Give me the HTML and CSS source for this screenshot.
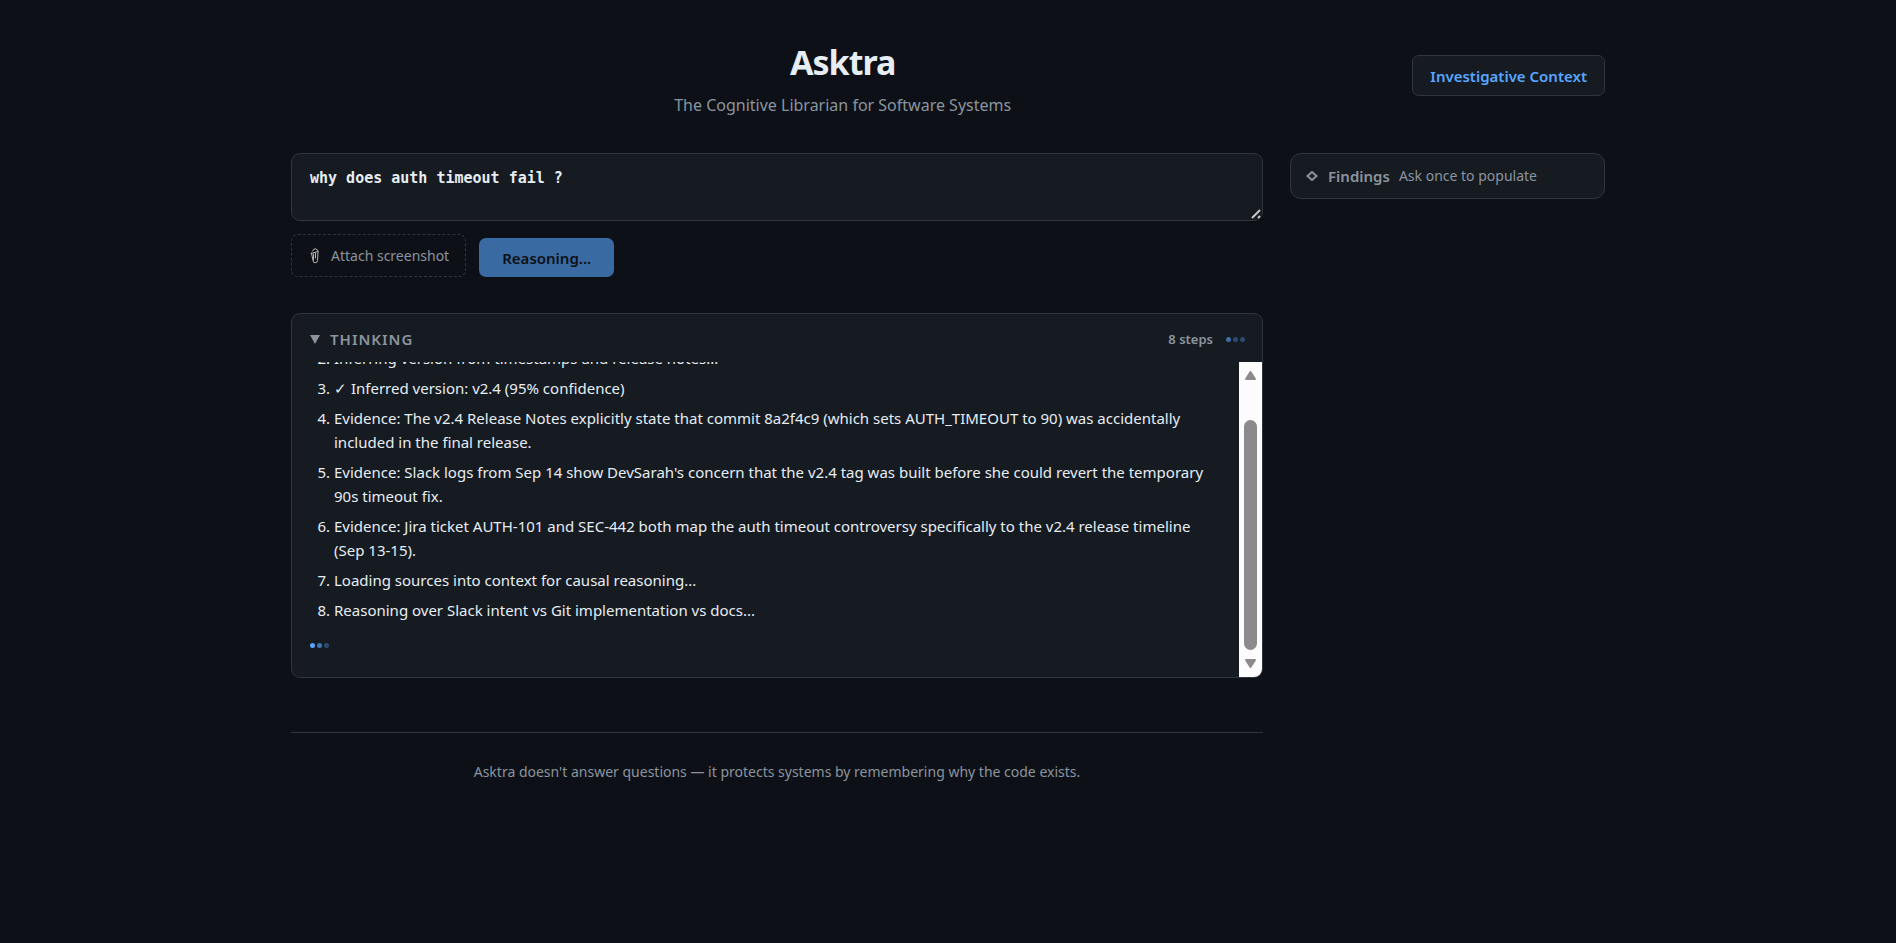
FILE: index.html
```html
<!DOCTYPE html>
<html lang="en">
<head>
    <meta charset="UTF-8">
    <title>Asktra</title>
    <link rel="stylesheet" href="styles.css">
</head>
<body>
    <div class="app">
        <header class="header">
            <div class="header-center">
                <h1>Asktra</h1>
                <p class="tagline">The Cognitive Librarian for Software Systems</p>
            </div>
            <button type="button" class="context-btn">Investigative Context</button>
        </header>

        <div class="layout">
            <main class="main">
                <form class="ask-form">
                    <textarea class="query" aria-label="Question">why does auth timeout fail ?</textarea>
                    <div class="actions">
                        <button type="button" class="attach-btn">
                            <svg class="clip" viewBox="0 0 10 16" aria-hidden="true">
                                <path d="M1.500 5l1.500 7.500a2.200 2.200 0 0 0 4.500 0L8 4a2.800 2.800 0 0 0-5.500-1M3.500 6v6M5.500 5v5M1 5.500l7-2" fill="none" stroke="#b9b4b2" stroke-linecap="round"/>
                            </svg>
                            Attach screenshot
                        </button>
                        <button type="submit" class="ask-btn" disabled>Reasoning...</button>
                    </div>
                </form>

                <section class="thinking">
                    <button type="button" class="thinking-header" aria-expanded="true">
                        <svg class="chevron" viewBox="0 0 10 9" aria-hidden="true"><path d="M0 0h10L5 9z"/></svg>
                        <span class="thinking-title">Thinking</span>
                        <span class="step-count">8 steps</span>
                        <span class="dots dots-header"><i></i><i></i><i></i></span>
                    </button>
                    <div class="thinking-panel">
                        <div class="thinking-body" id="thinkingBody">
                            <ol class="steps" start="2">
                                <li>Inferring version from timestamps and release notes...</li>
                                <li>✓ Inferred version: v2.4 (95% confidence)</li>
                                <li>Evidence: The v2.4 Release Notes explicitly state that commit 8a2f4c9 (which sets AUTH_TIMEOUT to 90) was accidentally included in the final release.</li>
                                <li>Evidence: Slack logs from Sep 14 show DevSarah's concern that the v2.4 tag was built before she could revert the temporary 90s timeout fix.</li>
                                <li>Evidence: Jira ticket AUTH-101 and SEC-442 both map the auth timeout controversy specifically to the v2.4 release timeline (Sep 13-15).</li>
                                <li>Loading sources into context for causal reasoning...</li>
                                <li>Reasoning over Slack intent vs Git implementation vs docs...</li>
                            </ol>
                            <span class="dots dots-body"><i></i><i></i><i></i></span>
                        </div>
                        <div class="scrollbar" aria-hidden="true">
                            <svg class="scroll-arrow" viewBox="0 0 11 9"><path d="M5.500 1L10 8H1z"/></svg>
                            <div class="scroll-track"><div class="scroll-thumb"></div></div>
                            <svg class="scroll-arrow" viewBox="0 0 11 9"><path d="M5.500 8L10 1H1z"/></svg>
                        </div>
                    </div>
                </section>

                <footer class="footer">Asktra doesn't answer questions — it protects systems by remembering why the code exists.</footer>
            </main>

            <aside class="findings">
                <svg class="diamond" viewBox="0 0 12 10" aria-hidden="true"><path d="M6 1l4.500 4L6 9 1.500 5z"/></svg>
                <span class="findings-title">Findings</span>
                <span class="findings-hint">Ask once to populate</span>
            </aside>
        </div>
    </div>

    <script>
        // Keep the newest step in view
        var body = document.getElementById("thinkingBody");
        body.scrollTop = body.scrollHeight;
    </script>
</body>
</html>
```
FILE: styles.css
```css
:root {
    --bg: #0d1117;
    --surface: #161b22;
    --border: #30363d;
    --text: #e6edf3;
    --muted: #8b949e;
    --accent: #58a6ff;
}

* {
    box-sizing: border-box;
}

body {
    margin: 0;
    background: var(--bg);
    color: var(--text);
    font-family: "Segoe UI", "Noto Sans", sans-serif;
    font-size: 15px;
    line-height: 24px;
}

button {
    font-family: inherit;
    cursor: pointer;
}

.app {
    max-width: 1368px;
    margin: 0 auto;
    padding: 40px 27px;
}

.header {
    display: flex;
    align-items: flex-start;
    gap: 18px;
    margin-bottom: 34px;
}

.header-center {
    flex: 1;
    text-align: center;
}

h1 {
    margin: 0 0 8px;
    font-size: 34px;
    line-height: 44px;
    font-weight: 700;
    letter-spacing: -1px;
}

.tagline {
    margin: 0;
    color: var(--muted);
    font-size: 16px;
    line-height: 27px;
}

.context-btn {
    height: 41px;
    margin-top: 15px;
    padding: 0 17px;
    border: 1px solid var(--border);
    border-radius: 7px;
    background: var(--surface);
    color: var(--accent);
    font-size: 15px;
    font-weight: 600;
}

.layout {
    display: grid;
    grid-template-columns: 1fr 315px;
    gap: 27px;
    align-items: start;
}

.query {
    display: block;
    width: 100%;
    height: 68px;
    padding: 12px 18px;
    border: 1px solid var(--border);
    border-radius: 9px;
    background: var(--surface);
    color: var(--text);
    font-family: Consolas, "DejaVu Sans Mono", monospace;
    font-size: 15px;
    font-weight: 700;
    line-height: 24px;
    resize: vertical;
}

.query::-webkit-resizer {
    background: url("data:image/svg+xml,%3Csvg xmlns='http://www.w3.org/2000/svg' width='12' height='12'%3E%3Cpath d='M2 10L10 2M8 10L10 8' stroke='%23c8c8c8' stroke-width='2'/%3E%3C/svg%3E") right bottom no-repeat;
}

.actions {
    display: flex;
    align-items: flex-end;
    gap: 13px;
    margin-top: 13px;
}

.attach-btn {
    display: flex;
    align-items: center;
    gap: 11px;
    height: 43px;
    padding: 0 16px 0 18px;
    border: 1px dashed var(--border);
    border-radius: 7px;
    background: transparent;
    color: var(--muted);
    font-size: 14px;
}

.clip {
    width: 10px;
    height: 16px;
}

.ask-btn {
    height: 39px;
    padding: 0 23px;
    border: 0;
    border-radius: 7px;
    background: var(--accent);
    color: var(--bg);
    font-size: 15px;
    font-weight: 600;
    opacity: 0.6;
}

.thinking {
    margin-top: 36px;
    border: 1px solid var(--border);
    border-radius: 9px;
    background: var(--surface);
    overflow: hidden;
}

.thinking-header {
    display: flex;
    align-items: center;
    width: 100%;
    height: 48px;
    padding: 2px 17px 0 18px;
    border: 0;
    background: transparent;
    color: var(--muted);
    font-size: 14px;
    font-weight: 600;
}

.chevron {
    width: 10px;
    height: 9px;
    margin-right: 10px;
    fill: currentColor;
}

.thinking-title {
    font-size: 15px;
    text-transform: uppercase;
    letter-spacing: 1px;
}

.step-count {
    margin-left: auto;
    margin-right: 13px;
    font-size: 13px;
}

.dots {
    display: flex;
    gap: 2px;
}

.dots i {
    width: 5px;
    height: 5px;
    border-radius: 50%;
    background: var(--accent);
}

.dots-header i {
    opacity: 0.35;
}

.dots-header i:first-child {
    opacity: 0.6;
}

.dots-body i:nth-child(2) {
    opacity: 0.65;
}

.dots-body i:nth-child(3) {
    opacity: 0.35;
}

.thinking-panel {
    display: flex;
    height: 315px;
}

.thinking-body {
    flex: 1;
    padding: 0 18px 29px;
    overflow-y: scroll;
    scrollbar-width: none;
}

.scrollbar {
    display: flex;
    flex-direction: column;
    align-items: center;
    gap: 9px;
    width: 23px;
    padding: 9px 0;
    background: #fcfcfc;
}

.scroll-arrow {
    width: 11px;
    height: 9px;
    fill: #8b8b8b;
    stroke: #8b8b8b;
    stroke-width: 2;
    stroke-linejoin: round;
}

.scroll-track {
    display: flex;
    flex: 1;
    align-items: flex-end;
}

/* Thumb sits at the end of the track */
.scroll-thumb {
    width: 13px;
    height: 88%;
    border-radius: 7px;
    background: #8b8b8b;
}

.steps {
    margin: 0 0 21px;
    padding-left: 24px;
}

.steps li {
    margin-bottom: 6px;
    font-size: 15px;
}

.footer {
    margin-top: 54px;
    padding-top: 27px;
    border-top: 1px solid var(--border);
    color: var(--muted);
    font-size: 14px;
    text-align: center;
}

.findings {
    display: flex;
    align-items: center;
    height: 46px;
    padding: 0 15px;
    border: 1px solid var(--border);
    border-radius: 11px;
    background: var(--surface);
    color: var(--muted);
}

.diamond {
    width: 12px;
    height: 10px;
    margin-right: 10px;
    fill: none;
    stroke: currentColor;
    stroke-width: 2;
}

.findings-title {
    margin-right: 9px;
    font-size: 15px;
    font-weight: 600;
}

.findings-hint {
    font-size: 14px;
}
```
